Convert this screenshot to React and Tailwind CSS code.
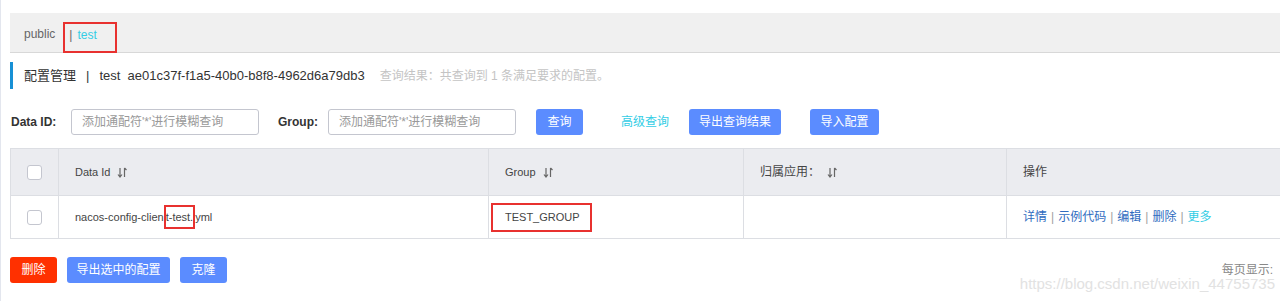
import React from "react";

const SortIcon = () => (
  <svg width="11" height="11" viewBox="0 0 11 11" className="ml-[7px] inline-block" fill="none" stroke="#666" strokeWidth="1.2">
    <path d="M3 1v9M1 7.5L3 10l2-2.5" />
    <path d="M7.5 10V1M7.5 1l2 2" />
  </svg>
);

const Checkbox = () => (
  <div className="w-[15px] h-[15px] rounded-[3px] border border-[#c4c6cf] bg-white" />
);

const Sep = () => <span className="mx-[4px] text-[#a0a0a0]">|</span>;

const App = () => {
  return (
    <div
      className="w-[1280px] h-[301px] bg-white overflow-hidden border-l border-[#e3e6ee] text-[#333] relative"
      style={{ fontFamily: "'Liberation Sans', 'Noto Sans CJK SC', sans-serif" }}
    >
      {/* namespace bar */}
      <div className="mt-[13px] ml-[9px] h-[40px] bg-[#f0f0f0] border-b border-[#d8d8d8] flex items-center text-[12px] pl-[14px]">
        <span className="text-[#666] mt-[3px]">public</span>
        <span className="ml-[8px] self-end mb-[-1px] h-[31px] w-[54px] border-2 border-[#e8312f] flex items-center pb-[5px] pl-[4px]">
          <span className="text-[#666]">|</span>
          <span className="ml-[5px] text-[#33cde5]">test</span>
        </span>
      </div>

      {/* title */}
      <div className="mt-[9px] ml-[9px] flex items-center h-[27px] border-l-[3px] border-[#1790d5] pl-[11px]">
        <span className="text-[13px] text-[#333]">配置管理</span>
        <span className="mx-[10px] text-[13px] text-[#333]">|</span>
        <span className="text-[13px] text-[#333]">test&nbsp; ae01c37f-f1a5-40b0-b8f8-4962d6a79db3</span>
        <span className="ml-[15px] text-[12px] text-[#c4c4c4]">查询结果：共查询到 1 条满足要求的配置。</span>
      </div>

      {/* search row */}
      <div className="mt-[20px] ml-[10px] flex items-center h-[26px] text-[12px]">
        <span className="font-bold text-[#333] w-[60px]">Data ID:</span>
        <div className="w-[188px] h-[26px] border border-[#c4c6cf] rounded-[3px] flex items-center pl-[10px] text-[#999]">添加通配符'*'进行模糊查询</div>
        <span className="font-bold text-[#333] ml-[19px] w-[50px]">Group:</span>
        <div className="w-[188px] h-[26px] border border-[#c4c6cf] rounded-[3px] flex items-center pl-[10px] text-[#999]">添加通配符'*'进行模糊查询</div>
        <button className="ml-[20px] w-[47px] h-[26px] bg-[#5b8cff] rounded-[3px] text-white">查询</button>
        <span className="ml-[38px] text-[#33cde5]">高级查询</span>
        <button className="ml-[20px] w-[92px] h-[26px] bg-[#5b8cff] rounded-[3px] text-white">导出查询结果</button>
        <button className="ml-[29px] w-[69px] h-[26px] bg-[#5b8cff] rounded-[3px] text-white">导入配置</button>
      </div>

      {/* table */}
      <div className="mt-[13px] ml-[9px] border-t border-l border-[#dcdee3] text-[12px]">
        <div className="flex h-[47px] bg-[#ebecf0] border-b border-[#dcdee3]">
          <div className="w-[48px] flex items-center justify-center border-r border-[#dcdee3]"><Checkbox /></div>
          <div className="w-[430px] flex items-center pl-[16px] border-r border-[#dcdee3] text-[#444] text-[11px]">Data Id<SortIcon /></div>
          <div className="w-[255px] flex items-center pl-[16px] border-r border-[#dcdee3] text-[#444] text-[11px]">Group<SortIcon /></div>
          <div className="w-[263px] flex items-center pl-[16px] border-r border-[#dcdee3] text-[#444]">归属应用：<SortIcon /></div>
          <div className="flex-1 flex items-center pl-[16px] text-[#444]">操作</div>
        </div>
        <div className="flex h-[43px] border-b border-[#dcdee3]">
          <div className="w-[48px] flex items-center justify-center border-r border-[#dcdee3]"><Checkbox /></div>
          <div className="w-[430px] flex items-center pl-[16px] border-r border-[#dcdee3] text-[#444] text-[11px]">
            nacos-config-clien<span className="h-[24px] border-2 border-[#e8312f] flex items-center">t-test.</span>yml
          </div>
          <div className="w-[255px] flex items-center pl-[2px] border-r border-[#dcdee3] text-[#444] text-[11px]">
            <span className="w-[101px] h-[29px] border-2 border-[#e8312f] flex items-center pl-[12px]">TEST_GROUP</span>
          </div>
          <div className="w-[263px] border-r border-[#dcdee3]" />
          <div className="flex-1 flex items-center pl-[16px] text-[#2f6cc0]">
            <span>详情</span>
            <Sep />
            <span>示例代码</span>
            <Sep />
            <span>编辑</span>
            <Sep />
            <span>删除</span>
            <Sep />
            <span className="text-[#33cde5]">更多</span>
          </div>
        </div>
      </div>

      {/* bottom row */}
      <div className="mt-[18px] ml-[9px] flex items-center text-[12px]">
        <button className="w-[47px] h-[26px] bg-[#ff3000] rounded-[3px] text-white">删除</button>
        <button className="ml-[10px] w-[103px] h-[26px] bg-[#5b8cff] rounded-[3px] text-white">导出选中的配置</button>
        <button className="ml-[10px] w-[47px] h-[26px] bg-[#5b8cff] rounded-[3px] text-white">克隆</button>
        <span className="ml-auto mr-[7px] text-[#888]">每页显示:</span>
      </div>

      <div className="absolute right-[5px] bottom-[6px] text-[15px] text-[#e2e2e2]">
        https://blog.csdn.net/weixin_44755735
      </div>
    </div>
  );
};

export default App;
